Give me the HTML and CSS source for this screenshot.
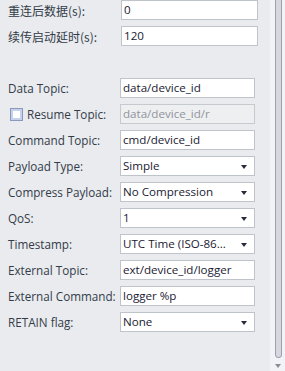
FILE: index.html
```html
<!DOCTYPE html>
<html>
<head>
<meta charset="utf-8">
<link rel="stylesheet" href="styles.css">
</head>
<body>
<div class="page">
  <div class="form">
    <div class="group top">
      <div class="row"><span class="label cjk">重连后数据(s):</span><div class="field">0</div></div>
      <div class="row"><span class="label cjk">续传启动延时(s):</span><div class="field">120</div></div>
    </div>
    <div class="group main">
      <div class="row"><span class="label">Data Topic:</span><div class="field">data/device_id</div></div>
      <div class="row"><span class="label check"><span class="checkbox"></span>Resume Topic:</span><div class="field disabled">data/device_id/r</div></div>
      <div class="row"><span class="label">Command Topic:</span><div class="field">cmd/device_id</div></div>
      <div class="row"><span class="label">Payload Type:</span><div class="field select">Simple<span class="arrow"></span></div></div>
      <div class="row"><span class="label">Compress Payload:</span><div class="field select">No Compression<span class="arrow"></span></div></div>
      <div class="row"><span class="label">QoS:</span><div class="field select">1<span class="arrow"></span></div></div>
      <div class="row"><span class="label">Timestamp:</span><div class="field select">UTC Time (ISO-86...<span class="arrow"></span></div></div>
      <div class="row"><span class="label">External Topic:</span><div class="field">ext/device_id/logger</div></div>
      <div class="row"><span class="label">External Command:</span><div class="field">logger %p</div></div>
      <div class="row"><span class="label">RETAIN flag:</span><div class="field select">None<span class="arrow"></span></div></div>
    </div>
  </div>
  <div class="scrollbar">
    <div class="thumb"></div>
    <div class="down"></div>
  </div>
</div>
</body>
</html>
```
FILE: styles.css
```css
html, body {
  margin: 0;
  padding: 0;
}
body {
  width: 285px;
  height: 371px;
  overflow: hidden;
  background: #e9ebef;
  font-family: "Open Sans", "Noto Sans CJK SC", sans-serif;
  font-size: 11.7px;
  color: #333c48;
}
.page {
  display: flex;
  height: 371px;
}
.form {
  width: 270px;
  display: flex;
  flex-direction: column;
}
.group {
  display: flex;
  flex-direction: column;
  gap: 6px;
}
.group.top {
  padding-left: 8px;
}
.group.main {
  margin-top: 32px;
  padding-left: 8px;
}
.row {
  display: flex;
  align-items: center;
  height: 20px;
}
.label {
  white-space: nowrap;
  display: flex;
  align-items: center;
}
.group.top .label {
  width: 113px;
}
.group.main .label {
  width: 112px;
}
.cjk {
  font-family: "Noto Sans CJK SC", sans-serif;
  font-size: 12px;
}
.check {
  padding-left: 2px;
  box-sizing: border-box;
}
.checkbox {
  width: 11px;
  height: 11px;
  border: 1px solid #8a98bc;
  box-shadow: inset 0 0 0 2px #c6d1ec;
  background: #fff;
  margin-right: 4px;
}
.field {
  position: relative;
  box-sizing: border-box;
  height: 20px;
  border: 1px solid #bfc3ca;
  background: #fff;
  color: #1a1a32;
  padding-left: 2px;
  line-height: 18px;
  white-space: nowrap;
  font-size: 11.6px;
}
.group.top .field {
  width: 137px;
}
.group.main .field {
  width: 135px;
}
.field.disabled {
  background: #eeeff1;
  border-color: #c6c9ce;
  color: #90949c;
}
.arrow {
  position: absolute;
  right: 7px;
  top: 8px;
  width: 0;
  height: 0;
  border-left: 3.5px solid transparent;
  border-right: 3.5px solid transparent;
  border-top: 4px solid #2a2a3a;
}
.scrollbar {
  position: relative;
  width: 15px;
  height: 371px;
  background: #f2f3f6;
}
.thumb {
  position: absolute;
  left: 5px;
  top: -4px;
  width: 5px;
  height: 360px;
  border: 1px solid #9d9fae;
  border-radius: 0 0 3px 3px;
  background: #d6d7df;
}
.down {
  position: absolute;
  left: 5px;
  top: 364px;
  width: 0;
  height: 0;
  border-left: 3.5px solid transparent;
  border-right: 3.5px solid transparent;
  border-top: 4px solid #8b8d98;
}
```
